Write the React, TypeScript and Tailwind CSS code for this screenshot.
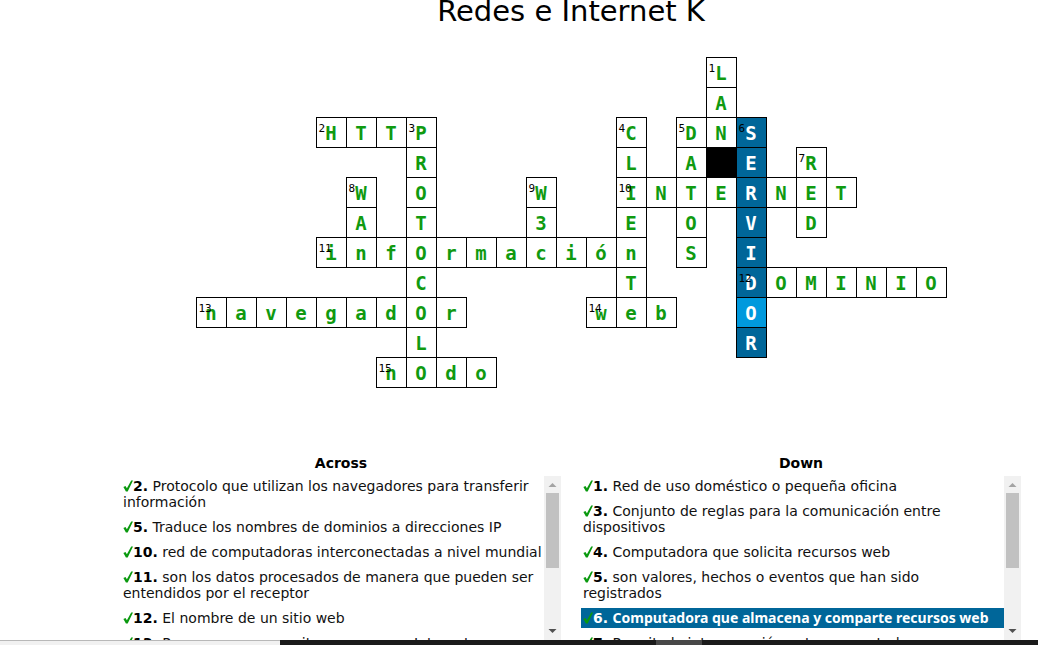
import React from "react";

type Clue = { n: number; text: string; selected?: boolean };
type Word = { n: number; row: number; col: number; dir: "a" | "d"; text: string };

const ROWS = 11;
const COLS = 25;

const words: Word[] = [
  { n: 1, row: 0, col: 17, dir: "d", text: "LAN" },
  { n: 2, row: 2, col: 4, dir: "a", text: "HTTP" },
  { n: 3, row: 2, col: 7, dir: "d", text: "PROTOCOLO" },
  { n: 4, row: 2, col: 14, dir: "d", text: "CLIEnTe" },
  { n: 5, row: 2, col: 16, dir: "d", text: "DATOS" },
  { n: 6, row: 2, col: 18, dir: "d", text: "SERVIDOR" },
  { n: 7, row: 3, col: 20, dir: "d", text: "RED" },
  { n: 8, row: 4, col: 5, dir: "d", text: "WAn" },
  { n: 9, row: 4, col: 11, dir: "d", text: "W3c" },
  { n: 10, row: 4, col: 14, dir: "a", text: "INTERNET" },
  { n: 11, row: 6, col: 4, dir: "a", text: "infOrmación" },
  { n: 12, row: 7, col: 18, dir: "a", text: "DOMINIO" },
  { n: 13, row: 8, col: 0, dir: "a", text: "navegadOr" },
  { n: 14, row: 8, col: 13, dir: "a", text: "web" },
  { n: 15, row: 10, col: 6, dir: "a", text: "nOdo" },
];

const blocks = new Set(["3-17"]);
const selectedWord = 6;
const activeCell = "8-18";

type Cell = { letter: string; n?: number; selected?: boolean };
const cells = new Map<string, Cell>();
for (const w of words) {
  Array.from(w.text).forEach((letter, i) => {
    const key = w.dir === "a" ? `${w.row}-${w.col + i}` : `${w.row + i}-${w.col}`;
    const cell: Cell = cells.get(key) ?? { letter };
    if (i === 0) cell.n = w.n;
    if (w.n === selectedWord) cell.selected = true;
    cells.set(key, cell);
  });
}

const across: Clue[] = [
  { n: 2, text: "Protocolo que utilizan los navegadores para transferir información" },
  { n: 5, text: "Traduce los nombres de dominios a direcciones IP" },
  { n: 10, text: "red de computadoras interconectadas a nivel mundial" },
  { n: 11, text: "son los datos procesados de manera que pueden ser entendidos por el receptor" },
  { n: 12, text: "El nombre de un sitio web" },
  { n: 13, text: "Programa que permite navegar por Internet" },
];

const down: Clue[] = [
  { n: 1, text: "Red de uso doméstico o pequeña oficina" },
  { n: 3, text: "Conjunto de reglas para la comunicación entre dispositivos" },
  { n: 4, text: "Computadora que solicita recursos web" },
  { n: 5, text: "son valores, hechos o eventos que han sido registrados" },
  { n: 6, text: "Computadora que almacena y comparte recursos web", selected: true },
  { n: 7, text: "Permite la interconexión entre computadoras" },
];

function Square({ id }: { id: string }) {
  if (blocks.has(id)) return <td className="border border-black bg-black" />;
  const cell = cells.get(id);
  if (!cell) return <td />;
  const tone =
    id === activeCell
      ? "bg-[#0099dd] text-white"
      : cell.selected
        ? "bg-[#006699] text-white"
        : "bg-white text-[#109a10]";
  return (
    <td className={`relative border border-black p-0 text-center align-middle text-[19px] leading-5 font-bold ${tone}`}>
      {cell.letter}
      {cell.n && (
        <span className="absolute top-[5px] left-0.5 text-[11px] leading-3 font-normal text-black">{cell.n}</span>
      )}
    </td>
  );
}

function Scrollbar() {
  return (
    <div aria-hidden="true" className="flex w-[17px] shrink-0 flex-col items-center bg-[#f1f1f1]">
      <svg className="h-[17px] w-[17px]" viewBox="0 0 17 17">
        <path d="M8.5 7 L12.5 11 H4.5 Z" fill="#a3a3a3" />
      </svg>
      <div className="h-[75px] w-[13px] bg-[#c1c1c1]" />
      <svg className="mt-auto h-[17px] w-[17px]" viewBox="0 0 17 17">
        <path d="M4.5 6 H12.5 L8.5 10 Z" fill="#505050" />
      </svg>
    </div>
  );
}

function Check() {
  return (
    <svg className="inline-block h-3 w-2.5 align-[-1px]" viewBox="0 0 10 12" aria-hidden="true">
      <path d="M0.4 6.9 L2.5 5.9 L3.9 8.2 L8.2 0.4 L10 0.4 L4.7 11.6 L2.9 11.6 Z" fill="#0a990f" />
    </svg>
  );
}

function ClueList({ title, clues }: { title: string; clues: Clue[] }) {
  return (
    <section className="flex min-h-0 min-w-0 flex-1 flex-col">
      <h2 className="pb-[3px] text-center text-[14px] leading-5 font-bold">{title}</h2>
      <div className="flex min-h-0 flex-1">
        <ul className="min-w-0 flex-1 overflow-hidden">
          {clues.map((c) => (
            <li
              key={c.n}
              className={`mb-[5px] px-0.5 py-0.5 text-[14px] leading-4 ${c.selected ? "bg-[#006699] text-white" : "text-[#111]"}`}
            >
              <Check />
              <b className={c.selected ? "" : "text-black"}>{c.n}.</b>{" "}
              <span className={c.selected ? "font-['Noto_Sans',sans-serif] font-bold" : ""}>{c.text}</span>
            </li>
          ))}
        </ul>
        <Scrollbar />
      </div>
    </section>
  );
}

export default function App() {
  return (
    <div className="flex h-screen flex-col overflow-hidden bg-white font-['DejaVu_Sans',sans-serif] text-black">
      <main className="flex min-h-0 flex-1 flex-col pl-[104px]">
        <h1 className="-mt-[7px] text-center text-[29px] leading-9">Redes e Internet K</h1>
        <table className="mx-auto mt-7 table-fixed border-collapse font-['DejaVu_Sans_Mono',monospace]">
          <colgroup>
            {Array.from({ length: COLS }, (_, c) => (
              <col key={c} className="w-[30px]" />
            ))}
          </colgroup>
          <tbody>
            {Array.from({ length: ROWS }, (_, r) => (
              <tr key={r} className="h-[30px]">
                {Array.from({ length: COLS }, (_, c) => (
                  <Square key={c} id={`${r}-${c}`} />
                ))}
              </tr>
            ))}
          </tbody>
        </table>
        <div className="mx-auto mt-[65px] flex min-h-0 w-full max-w-[900px] flex-1 gap-5">
          <ClueList title="Across" clues={across} />
          <ClueList title="Down" clues={down} />
        </div>
      </main>
      <footer className="flex h-[5px] shrink-0 bg-[#1b1b1b]">
        <div className="w-[280px] border-t border-[#b8b8b8] bg-[#f1f1f1]" />
        <div className="ml-[376px] w-[46px] bg-[#484848]" />
      </footer>
    </div>
  );
}
